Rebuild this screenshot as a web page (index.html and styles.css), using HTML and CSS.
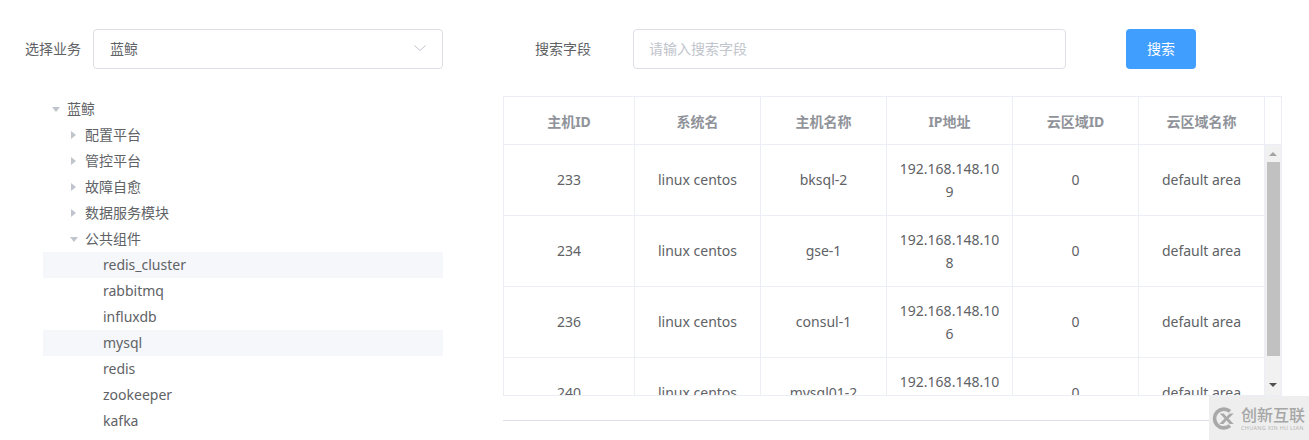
FILE: index.html
```html
<!DOCTYPE html>
<html lang="zh-CN">
<head>
  <meta charset="UTF-8" />
  <title>主机查询</title>
  <link rel="stylesheet" href="styles.css">
</head>
<body>
  <div class="page">
    <div class="left">
      <div class="form-row">
        <label class="biz-label">选择业务</label>
        <div class="select">
          <span>蓝鲸</span>
          <svg class="select-arrow" width="14" height="8" viewBox="0 0 14 8"><path d="M1.5 1.5 7 6.5l5.5-5" fill="none" stroke="#c0c4cc" stroke-width="1"/></svg>
        </div>
      </div>
      <ul class="tree">
        <li class="node"><i class="caret open"></i>蓝鲸</li>
        <li class="node lv1"><i class="caret"></i>配置平台</li>
        <li class="node lv1"><i class="caret"></i>管控平台</li>
        <li class="node lv1"><i class="caret"></i>故障自愈</li>
        <li class="node lv1"><i class="caret"></i>数据服务模块</li>
        <li class="node lv1"><i class="caret open"></i>公共组件</li>
        <li class="node lv2 hover">redis_cluster</li>
        <li class="node lv2">rabbitmq</li>
        <li class="node lv2">influxdb</li>
        <li class="node lv2 hover">mysql</li>
        <li class="node lv2">redis</li>
        <li class="node lv2">zookeeper</li>
        <li class="node lv2">kafka</li>
      </ul>
    </div>

    <div class="right">
      <div class="form-row search-row">
        <label class="search-label">搜索字段</label>
        <input class="search-input" type="text" placeholder="请输入搜索字段">
        <button class="search-btn">搜索</button>
      </div>

      <div class="table-wrap">
        <div class="table-head">
          <table>
            <colgroup><col class="col-first"><col class="col"><col class="col"><col class="col"><col class="col"><col class="col"></colgroup>
            <tr>
              <th>主机ID</th><th>系统名</th><th>主机名称</th><th>IP地址</th><th>云区域ID</th><th>云区域名称</th>
            </tr>
          </table>
          <div class="gutter"></div>
        </div>
        <div class="table-body">
          <div class="rows">
            <table>
              <colgroup><col class="col-first"><col class="col"><col class="col"><col class="col"><col class="col"><col class="col"></colgroup>
              <tr><td>233</td><td>linux centos</td><td>bksql-2</td><td class="ip">192.168.148.109</td><td>0</td><td>default area</td></tr>
              <tr><td>234</td><td>linux centos</td><td>gse-1</td><td class="ip">192.168.148.108</td><td>0</td><td>default area</td></tr>
              <tr><td>236</td><td>linux centos</td><td>consul-1</td><td class="ip">192.168.148.106</td><td>0</td><td>default area</td></tr>
              <tr><td>240</td><td>linux centos</td><td>mysql01-2</td><td class="ip">192.168.148.105</td><td>0</td><td>default area</td></tr>
            </table>
          </div>
          <div class="scrollbar">
            <i class="sb-up"></i>
            <div class="sb-thumb"></div>
            <i class="sb-down"></i>
          </div>
        </div>
      </div>
      <div class="pager-line"></div>
    </div>
  </div>

  <div class="watermark">
    <svg width="24" height="25" viewBox="0 0 26 26">
      <path d="M19.5 5.2A10.2 10.2 0 1 0 19.5 20.8" fill="none" stroke="#a9a9a9" stroke-width="4"/>
      <path d="M8.5 7.5h4.2l3 3.6 3.4-3.6h4.4l-5.6 5.5 5.6 5.9h-4.5l-3.3-3.8-3.4 3.8H8l5.6-5.9z" fill="#a9a9a9"/>
    </svg>
    <div class="wm-text">
      <div class="wm-cn">创新互联</div>
      <div class="wm-en">CHUANG XIN HU LIAN</div>
    </div>
  </div>
</body>
</html>
```

FILE: styles.css
```css
* {
  box-sizing: border-box;
}
html, body {
  height: 100%;
}
body {
  margin: 0;
  overflow: hidden;
  background-color: #fff;
  color: #606266;
  font-family: "Noto Sans", "Noto Sans CJK SC", sans-serif;
  font-size: 14px;
}
.page {
  display: flex;
  gap: 60px;
  padding-top: 29px;
}
.left {
  width: 443px;
  flex: none;
}
.right {
  width: 779px;
  flex: none;
}
.form-row {
  display: flex;
  align-items: center;
  height: 40px;
  margin-bottom: 27px;
  padding-left: 25px;
}
.biz-label {
  width: 68px;
  flex: none;
  padding-bottom: 2px;
}
.select {
  flex: 1;
  height: 40px;
  padding: 0 16px 2px;
  display: flex;
  align-items: center;
  justify-content: space-between;
  border: 1px solid #dcdfe6;
  border-radius: 4px;
}
.select-arrow {
  margin-right: -1px;
}
.tree {
  list-style: none;
  margin: 0 0 0 43px;
  padding: 0;
}
.node {
  height: 26px;
  line-height: 26px;
  padding-left: 24px;
  position: relative;
  white-space: nowrap;
}
.node.lv1 {
  padding-left: 42px;
}
.node.lv2 {
  padding-left: 60px;
}
.node.hover {
  background-color: #f5f7fa;
}
.caret {
  position: absolute;
  left: 10px;
  top: 10px;
  width: 0;
  height: 0;
  border-style: solid;
  border-width: 4px 0 4px 5px;
  border-color: transparent transparent transparent #c0c4cc;
}
.lv1 .caret {
  left: 28px;
  top: 9px;
}
.caret.open {
  left: 9px;
  top: 11px;
  border-width: 5px 4px 0 4px;
  border-color: #c0c4cc transparent transparent transparent;
}
.lv1 .caret.open {
  left: 27px;
  top: 11px;
}
.search-row {
  padding-left: 32px;
}
.search-label {
  width: 98px;
  flex: none;
  padding-bottom: 2px;
}
.search-input {
  width: 433px;
  height: 40px;
  padding: 0 15px 2px;
  border: 1px solid #dcdfe6;
  border-radius: 4px;
  outline: none;
  color: #606266;
  font-family: inherit;
  font-size: 14px;
}
.search-input::placeholder {
  color: #c0c4cc;
}
.search-btn {
  width: 70px;
  height: 40px;
  margin-left: 60px;
  padding: 0 0 2px;
  border: none;
  border-radius: 4px;
  background-color: #409eff;
  color: #fff;
  font-family: inherit;
  font-size: 14px;
}
.table-wrap {
  height: 300px;
  overflow: hidden;
  border: 1px solid #ebeef5;
}
.table-head {
  display: flex;
  height: 48px;
  border-bottom: 1px solid #ebeef5;
}
.gutter {
  width: 16px;
}
table {
  width: 761px;
  flex: none;
  table-layout: fixed;
  border-collapse: separate;
  border-spacing: 0;
}
.col-first {
  width: 131px;
}
.col {
  width: 126px;
}
th {
  height: 47px;
  padding: 0 10px;
  border-right: 1px solid #ebeef5;
  color: #909399;
  font-weight: 700;
  text-align: center;
}
td {
  height: 71px;
  padding: 11px 10px 13px;
  border-right: 1px solid #ebeef5;
  border-bottom: 1px solid #ebeef5;
  line-height: 23px;
  text-align: center;
  word-break: break-all;
}
td.ip {
  padding: 12px 10px;
}
.table-body {
  display: flex;
  height: 250px;
}
.rows {
  width: 761px;
  height: 250px;
  flex: none;
  overflow: hidden;
}
.scrollbar {
  width: 16px;
  height: 250px;
  display: flex;
  flex-direction: column;
  align-items: center;
  background-color: #f1f1f1;
}
.sb-up, .sb-down {
  width: 0;
  height: 0;
  border-style: solid;
  border-color: transparent;
}
.sb-up {
  margin-top: 7px;
  border-width: 0 4px 4px 4px;
  border-bottom-color: #a3a3a3;
}
.sb-thumb {
  width: 13px;
  height: 194px;
  margin-top: 6px;
  background-color: #c1c1c1;
}
.sb-down {
  margin-top: 27px;
  border-width: 4px 4px 0 4px;
  border-top-color: #505050;
}
.pager-line {
  height: 1px;
  margin-top: 24px;
  background-color: #dcdfe6;
}
.watermark {
  position: absolute;
  right: 0;
  bottom: 0;
  width: 100px;
  height: 44px;
  padding: 10px 0 0 3px;
  display: flex;
  gap: 5px;
  background-color: #eeeeee;
}
.wm-text {
  padding-top: 1px;
}
.wm-cn {
  color: #a6a6a6;
  font-size: 16px;
  font-weight: 500;
  line-height: 16px;
  white-space: nowrap;
}
.wm-en {
  margin-top: 2px;
  color: #b5b5b5;
  font-size: 5.5px;
  line-height: 6px;
  letter-spacing: 0.3px;
  white-space: nowrap;
}
```
